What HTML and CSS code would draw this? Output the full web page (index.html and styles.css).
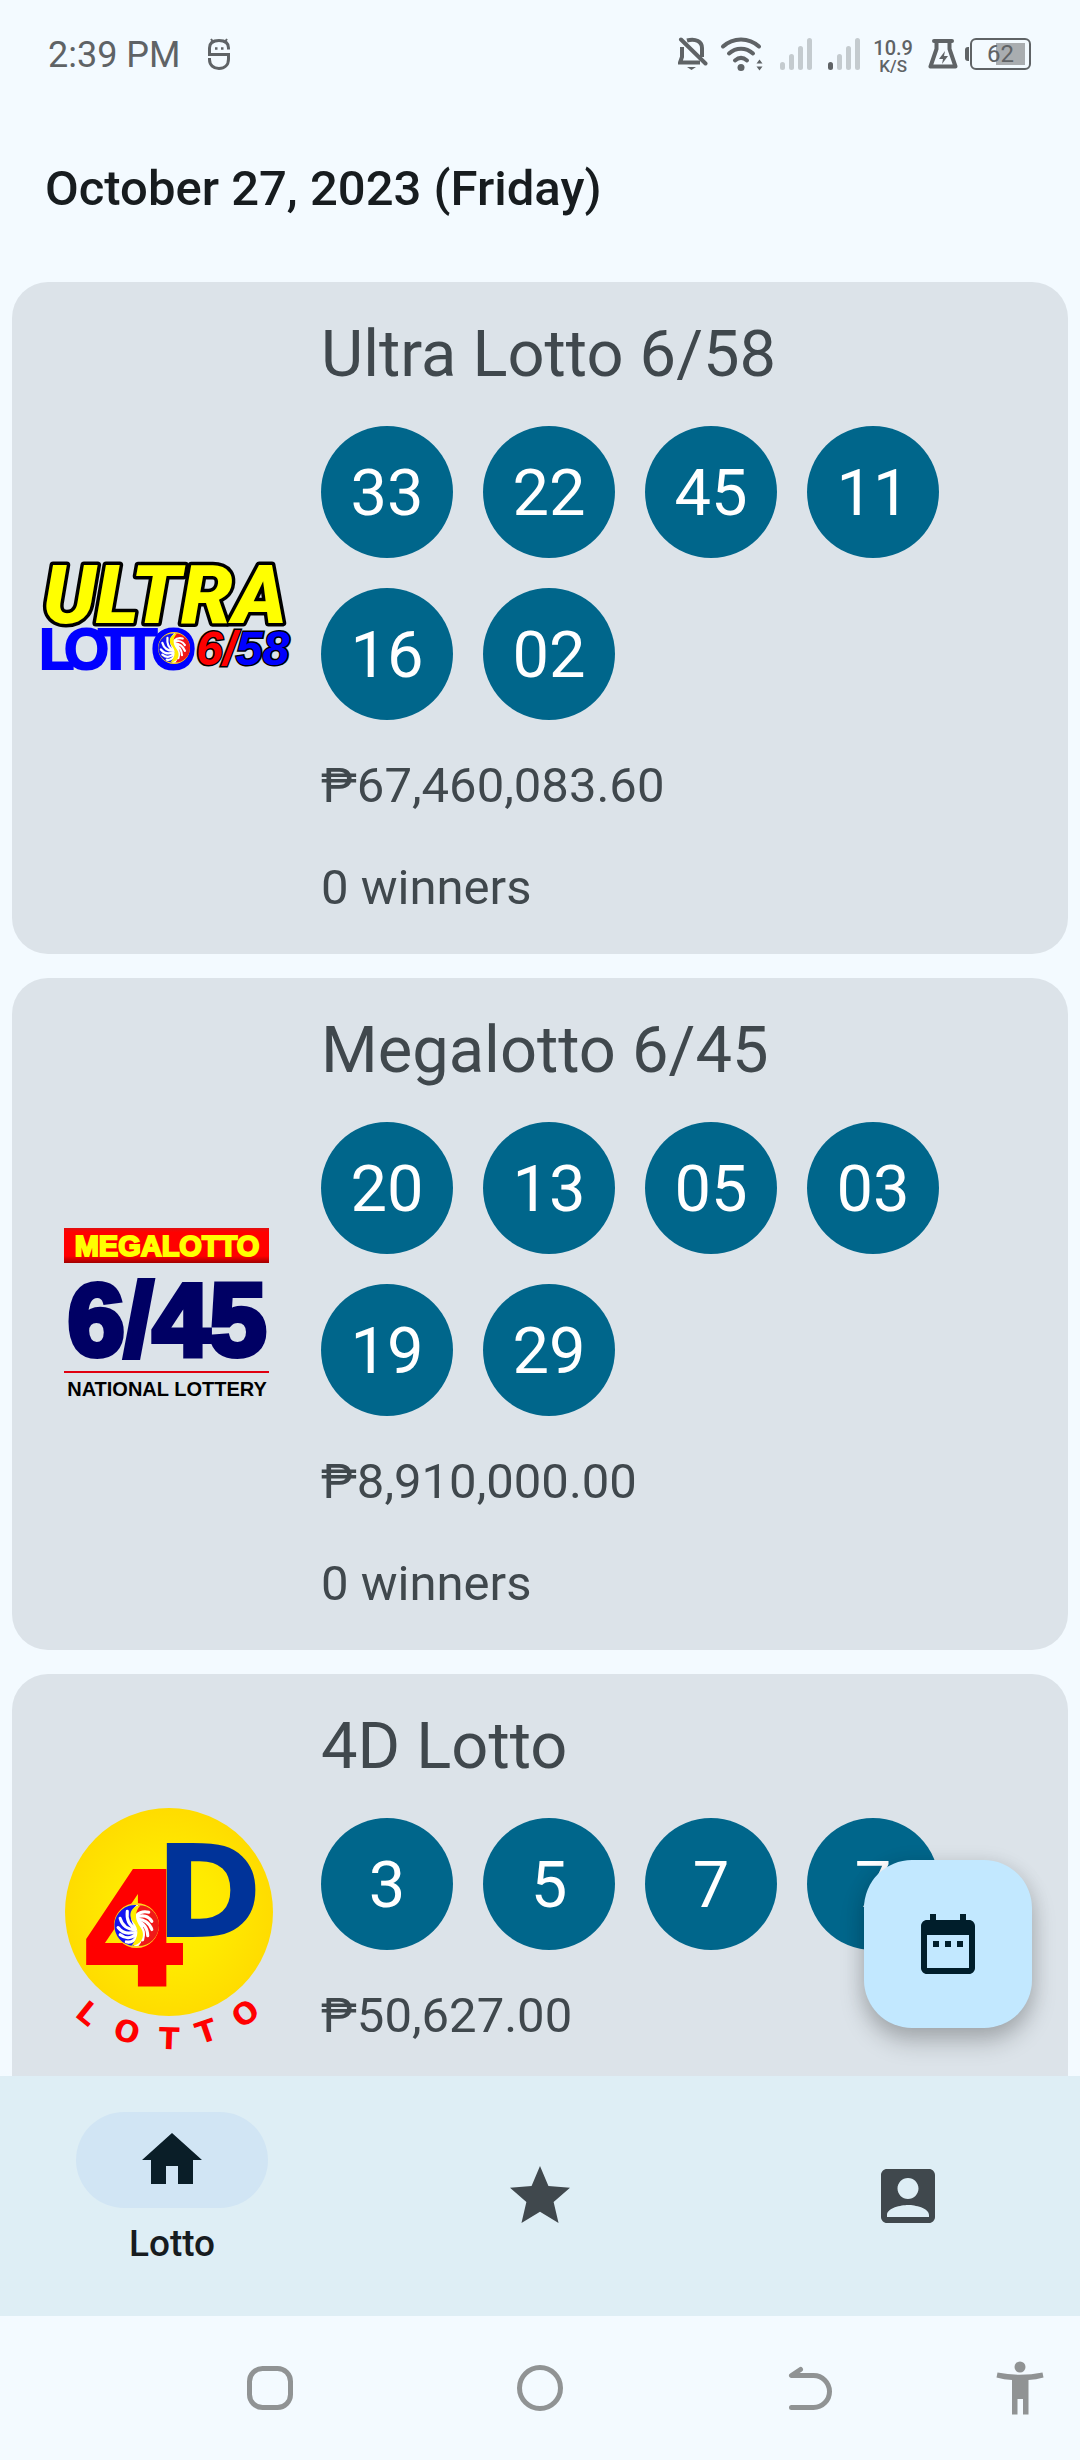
FILE: index.html
```html
<!DOCTYPE html>
<html lang="en">
<head>
<meta charset="utf-8">
<meta name="viewport" content="width=device-width, initial-scale=1">
<title>Lotto results</title>
<link rel="stylesheet" href="styles.css">
</head>
<body>
<svg width="0" height="0" class="defs" aria-hidden="true">
  <defs>
    <radialGradient id="sun"><stop offset="0" stop-color="#fff200"/><stop offset=".5" stop-color="#ffea00"/><stop offset="1" stop-color="#ffdc00"/></radialGradient>
    <linearGradient id="bar" x1="0" y1="0" x2="0" y2="1"><stop offset="0" stop-color="#e01010"/><stop offset=".12" stop-color="#f00"/><stop offset=".8" stop-color="#f00"/><stop offset="1" stop-color="#a00000"/></linearGradient>
    <symbol id="swirl" viewBox="-22 -22 44 44">
      <circle r="21" fill="#fff" stroke="#ffd21c" stroke-width="2"/>
      <path d="M0-20A20 20 0 0 0-3 20C2 16 2 8-1 3C-6-4-8-12 0-20Z" fill="#1414f0"/>
      <path d="M2-20A20 20 0 0 1 2 20C9 12 6 4 1-2C-3-8-2-15 2-20Z" fill="#f01818"/>
      <g fill="none" stroke="#fff" stroke-width="3" stroke-linecap="round">
        <path d="M-1 3C-7 0-10-6-9-14M-1 4C-9 4-14 0-16-7M-1 6C-8 9-14 7-18 2M0 8C-5 13-11 13-16 9M1 10C-2 15-6 17-10 16"/>
        <path d="M0-10C4-14 8-14 12-13M0-8C6-11 12-9 15-4M0-6C7-7 13-2 15 4M1-4C7-3 11 3 11 10M2-2C6 2 8 8 6 14"/>
      </g>
      <path d="M4-20C-7-18-8-9-3-3C2 3 3 10-5 20C6 19 9 9 4 2C-1-5-3-12 4-20Z" fill="#ffee00"/>
    </symbol>
  </defs>
</svg>
<div class="app">
  <div class="status">
    <span class="clock">2:39 PM</span>
    <svg class="app-mark" width="24" height="34" viewBox="0 0 24 34" fill="none" stroke="currentColor" stroke-width="3">
      <path d="M21.500 12.500V11C21.500 5.500 17.500 3.500 12 3.500S2.500 5.500 2.500 11V17.500H21.500V22C21.500 28 17.500 31.500 12 31.500S2.500 28 2.500 22.500V21"/><path d="M4 2l3 4M20 2l-3 4" stroke-width="2"/><path d="M8 11.500h2.500M14 11.500h2.500" stroke-width="2.500"/>
    </svg>
    <div class="indicators">
      <svg class="bell" width="30" height="34" viewBox="0 0 30 34" fill="none" stroke="currentColor" stroke-width="4">
        <path d="M4 10V20L2 25.500H22M9 3.500C18 1 24 5 24 11V20"/><path d="M3 2.500L27.500 26.500" stroke-linecap="round"/><path d="M9 30h9l-4.500 3z" fill="currentColor" stroke="none"/>
      </svg>
      <svg class="wifi" width="44" height="36" viewBox="0 0 44 36" fill="none" stroke="currentColor" stroke-width="4" stroke-linecap="round">
        <path d="M3 10.500C13 1 29 1 39 10.500M9 17.500C16 11 26 11 33 17.500M15 24.500C19 21 23 21 27 24.500"/><circle cx="21" cy="31.500" r="3.500" fill="currentColor" stroke="none"/><path d="M36.500 27.500l3-4 3 4zM36.500 30.500l3 4 3-4z" fill="currentColor" stroke="none"/>
      </svg>
      <svg class="signal" width="32" height="32" viewBox="0 0 32 32" fill="#c4cbcf"><rect y="24" width="5" height="8" rx="2.500"/><rect x="9" y="16" width="5" height="16" rx="2.500"/><rect x="18" y="8" width="5" height="24" rx="2.500"/><rect x="27" width="5" height="32" rx="2.500"/></svg>
      <svg class="signal" width="32" height="32" viewBox="0 0 32 32" fill="#c4cbcf"><rect y="24" width="5" height="8" rx="2.500" fill="#5f6366"/><rect x="9" y="16" width="5" height="16" rx="2.500"/><rect x="18" y="8" width="5" height="24" rx="2.500"/><rect x="27" width="5" height="32" rx="2.500"/></svg>
      <div class="speed"><span class="rate">10.9</span><span class="unit">K/S</span></div>
      <svg class="flask" width="30" height="32" viewBox="0 0 30 32" fill="none" stroke="currentColor" stroke-width="4" stroke-linejoin="round"><path d="M6 3H24" stroke-linecap="round"/><path d="M8.500 3V11L2.500 28.500H27.500L21.500 11V3"/><path d="M17 13l-6 8h4l-1 5 6-8h-4z" fill="currentColor" stroke="none"/></svg>
      <div class="battery"><span class="charge">62</span></div>
    </div>
  </div>

  <header class="header"><h1>October 27, 2023 (Friday)</h1></header>

  <div class="body">
    <main class="results">
      <article class="card">
        <svg class="logo" width="249" height="110" viewBox="0 0 249 110" role="img" aria-label="Ultra Lotto 6/58">
          <text class="logo-lotto" y="106" x="-3 22 56 80 109">LOTTO</text>
          <use href="#swirl" x="116" y="69" width="32" height="32"/>
          <text class="logo-draw" x="154" y="102"><tspan fill="#f00">6/</tspan><tspan fill="#00f">58</tspan></text>
          <text class="logo-ultra" x="1" y="60">ULTRA</text>
        </svg>
        <div class="info">
          <h2>Ultra Lotto 6/58</h2>
          <ul class="balls"><li>33</li><li>22</li><li>45</li><li>11</li><li>16</li><li>02</li></ul>
          <p>₱67,460,083.60</p>
          <p>0 winners</p>
        </div>
      </article>

      <article class="card">
        <svg class="logo" width="208" height="172" viewBox="0 0 208 172" role="img" aria-label="Megalotto 6/45">
          <rect x="1" width="205" height="35" fill="url(#bar)"/>
          <text class="logo-mega" x="104" y="28">MEGALOTTO</text>
          <text class="logo-645" x="104" y="127">6/45</text>
          <rect x="1" y="143" width="205" height="2" fill="#e00010"/>
          <text class="logo-national" x="104" y="168">NATIONAL LOTTERY</text>
        </svg>
        <div class="info">
          <h2>Megalotto 6/45</h2>
          <ul class="balls"><li>20</li><li>13</li><li>05</li><li>03</li><li>19</li><li>29</li></ul>
          <p>₱8,910,000.00</p>
          <p>0 winners</p>
        </div>
      </article>

      <article class="card">
        <svg class="logo" width="214" height="244" viewBox="-4 0 214 244" role="img" aria-label="4D Lotto">
          <circle cx="105" cy="105" r="104" fill="url(#sun)"/>
          <g class="logo-4d">
            <text x="15" y="179" font-size="160" fill="#f00">4</text>
            <text x="91" y="130" font-size="129" fill="#003399">D</text>
            <g font-size="30" fill="#f00" text-anchor="middle">
              <text transform="translate(24 206) rotate(39)" y="11">L</text>
              <text transform="translate(63 224) rotate(18)" y="11">O</text>
              <text transform="translate(105 231) rotate(2)" y="11">T</text>
              <text transform="translate(142 224) rotate(-19)" y="11">T</text>
              <text transform="translate(181 206) rotate(-38)" y="11">O</text>
            </g>
          </g>
          <use href="#swirl" x="50" y="96" width="45" height="45"/>
        </svg>
        <div class="info">
          <h2>4D Lotto</h2>
          <ul class="balls"><li>3</li><li>5</li><li>7</li><li>7</li></ul>
          <p>₱50,627.00</p>
          <p>0 winners</p>
        </div>
      </article>
    </main>
    <button class="fab" type="button" aria-label="Pick a date">
      <svg width="72" height="72" viewBox="0 0 24 24" fill="currentColor"><path d="M9 11H7v2h2v-2zm4 0h-2v2h2v-2zm4 0h-2v2h2v-2zm2-7h-1V2h-2v2H8V2H6v2H5c-1.110 0-1.990.9-1.990 2L3 20c0 1.100.89 2 2 2h14c1.100 0 2-.9 2-2V6c0-1.100-.9-2-2-2zm0 16H5V9h14v11z"/></svg>
    </button>
  </div>

  <nav class="tabs">
    <a href="#lotto" class="tab active" aria-current="page">
      <span class="pill"><svg width="72" height="72" viewBox="0 0 24 24" fill="currentColor"><path d="M10 20v-6h4v6h5v-8h3L12 3 2 12h3v8z"/></svg></span>
      <span class="label">Lotto</span>
    </a>
    <a href="#favorites" class="tab" aria-label="Favorites"><svg width="72" height="72" viewBox="0 0 24 24" fill="currentColor"><path d="M12 17.270L18.180 21l-1.640-7.030L22 9.240l-7.190-.61L12 2 9.190 8.630 2 9.240l5.460 4.730L5.820 21z"/></svg></a>
    <a href="#account" class="tab" aria-label="Account"><svg width="72" height="72" viewBox="0 0 24 24" fill="currentColor"><path d="M3 5v14c0 1.100.89 2 2 2h14c1.100 0 2-.9 2-2V5c0-1.100-.9-2-2-2H5c-1.110 0-2 .9-2 2zm12.500 4.500c0 1.930-1.570 3.500-3.500 3.500s-3.500-1.570-3.500-3.500S10.070 6 12 6s3.500 1.570 3.500 3.500zM5 18.300C5 16 9.670 15 12 15s7 1 7 3.300V19H5z"/></svg></a>
  </nav>

  <div class="system">
    <button type="button" aria-label="Recent apps"><svg width="48" height="48" viewBox="0 0 48 48" fill="none" stroke="currentColor" stroke-width="5"><rect x="3.500" y="4.500" width="41" height="39" rx="13"/></svg></button>
    <button type="button" aria-label="Home"><svg width="48" height="48" viewBox="0 0 48 48" fill="none" stroke="currentColor" stroke-width="5"><circle cx="24" cy="24" r="20.500"/></svg></button>
    <button type="button" aria-label="Back"><svg width="48" height="48" viewBox="0 0 48 48" fill="none" stroke="currentColor" stroke-width="5" stroke-linecap="round" stroke-linejoin="round"><path d="M14.500 5.500L5.500 11.500H27.500A16 16 0 0 1 27.500 43.500H5.500"/></svg></button>
    <button type="button" class="access" aria-label="Accessibility"><svg width="48" height="54" viewBox="0 0 48 54" fill="currentColor"><circle cx="24" cy="6" r="5.500"/><path d="M1.500 11.500Q24 16 46.500 11.500L47.500 16.500Q40 18.500 32.500 19V53.500H27V38H21.500V53.500H16V19Q8 18.500.5 16.500Z"/></svg></button>
  </div>
</div>
</body>
</html>
```
FILE: styles.css
```css
* { box-sizing: border-box; }

body {
  margin: 0;
  background: #f3faff;
  color: #40484d;
  font-family: Roboto, "Liberation Sans", sans-serif;
}

h1, h2, p, ul { margin: 0; padding: 0; font-weight: 400; }
ul { list-style: none; }
svg { display: block; flex: none; }
button { border: 0; padding: 0; background: none; color: inherit; font: inherit; }
.defs { position: absolute; }

.app { display: flex; flex-direction: column; height: 100vh; }

/* Status bar */
.status {
  display: flex;
  align-items: center;
  height: 108px;
  padding: 0 49px 0 48px;
  color: #5f6366;
}
.clock { font-size: 36px; line-height: 42px; padding-top: 2px; }
.app-mark { margin-left: 26px; }
.indicators { display: flex; align-items: center; margin-left: auto; }
.wifi { margin-left: 12px; }
.signal { margin-left: 16px; }
.speed {
  display: flex;
  flex-direction: column;
  align-items: center;
  margin: 4px 15px 0 13px;
  font-weight: 500;
}
.rate { font-size: 20px; line-height: 20px; }
.unit { font-size: 17px; line-height: 16px; }
.battery {
  position: relative;
  display: flex;
  align-items: center;
  justify-content: center;
  width: 61px;
  height: 32px;
  margin-left: 12px;
  border: 2px solid #5f6366;
  border-radius: 6px;
  background: linear-gradient(#a9adb0, #a9adb0) 24px 3px / 29px 22px no-repeat;
}
.battery::before {
  content: "";
  position: absolute;
  left: -7px;
  top: 7px;
  width: 4px;
  height: 14px;
  border-radius: 3px 0 0 3px;
  background: #5f6366;
}
.charge { font-size: 24px; line-height: 28px; }

/* Page heading */
.header { padding: 45px; color: #171c1f; }
.header h1 { font-size: 49px; line-height: 72px; font-weight: 500; }

/* Results */
.body { position: relative; flex: 1; min-height: 0; }
.results {
  display: flex;
  flex-direction: column;
  gap: 24px;
  height: 100%;
  padding: 12px;
  overflow-y: auto;
  scrollbar-width: none;
}
.card {
  display: grid;
  grid-template-columns: 1fr 3fr;
  flex: none;
  padding: 30px;
  border-radius: 36px;
  background: #dce3e9;
}
.logo { place-self: center; max-width: 100%; overflow: visible; }
.info {
  display: flex;
  flex-direction: column;
  gap: 30px;
  padding-left: 30px;
}
.info h2 { font-size: 65px; line-height: 84px; }
.info p { font-size: 49px; line-height: 72px; }
.balls { display: flex; flex-wrap: wrap; gap: 30px; }
.balls li {
  width: 132px;
  height: 132px;
  border-radius: 50%;
  background: #00668b;
  color: #fff;
  font-size: 65px;
  line-height: 134px;
  text-align: center;
}

/* Lettering inside the game logos */
.logo-ultra {
  font: italic 900 82px Roboto, sans-serif;
  fill: #ff0;
  stroke: #000;
  stroke-width: 7px;
  paint-order: stroke;
  stroke-linejoin: round;
}
.logo-lotto {
  font: 700 58px "Liberation Sans", sans-serif;
  fill: #00f;
  stroke: #00f;
  stroke-width: 2px;
}
.logo-draw {
  font: italic 700 48px "Liberation Sans", sans-serif;
  stroke: #000;
  stroke-width: 3px;
  paint-order: stroke;
}
.logo-mega {
  font: 700 29px "Liberation Sans", sans-serif;
  fill: #ff0;
  stroke: #ff0;
  stroke-width: 2px;
  text-anchor: middle;
}
.logo-645 {
  font: 700 102px "Liberation Sans", sans-serif;
  fill: #000064;
  stroke: #000064;
  stroke-width: 6px;
  text-anchor: middle;
}
.logo-national {
  font: 700 20px "Liberation Sans", sans-serif;
  fill: #000;
  text-anchor: middle;
}
.logo-4d { font-family: "DejaVu Sans", sans-serif; font-weight: 700; }

.fab {
  position: absolute;
  right: 48px;
  bottom: 48px;
  display: grid;
  place-items: center;
  width: 168px;
  height: 168px;
  border-radius: 48px;
  background: #c2e8ff;
  color: #001e2b;
  box-shadow: 0 14px 24px rgba(0, 0, 0, .22), 0 2px 20px rgba(0, 0, 0, .1);
}

/* Bottom tabs */
.tabs {
  position: relative;
  display: flex;
  gap: 24px;
  height: 240px;
  background: #deeef5;
}
.tab {
  flex: 1;
  display: flex;
  flex-direction: column;
  align-items: center;
  justify-content: center;
  gap: 12px;
  color: #40484d;
  text-decoration: none;
}
.tab.active { justify-content: flex-start; padding-top: 36px; color: #0a1e28; }
.pill {
  display: grid;
  place-items: center;
  width: 192px;
  height: 96px;
  border-radius: 48px;
  background: #d1e5f4;
}
.label { color: #171c1f; font-size: 37px; line-height: 48px; font-weight: 500; }

/* System navigation */
.system {
  display: grid;
  grid-template-columns: 1fr 2fr 2fr 2fr 1fr;
  height: 144px;
  color: #909394;
}
.system button { display: grid; place-items: center; }
.system button:first-child { grid-column: 2; }
.system .access { justify-content: end; padding-right: 36px; }
```
